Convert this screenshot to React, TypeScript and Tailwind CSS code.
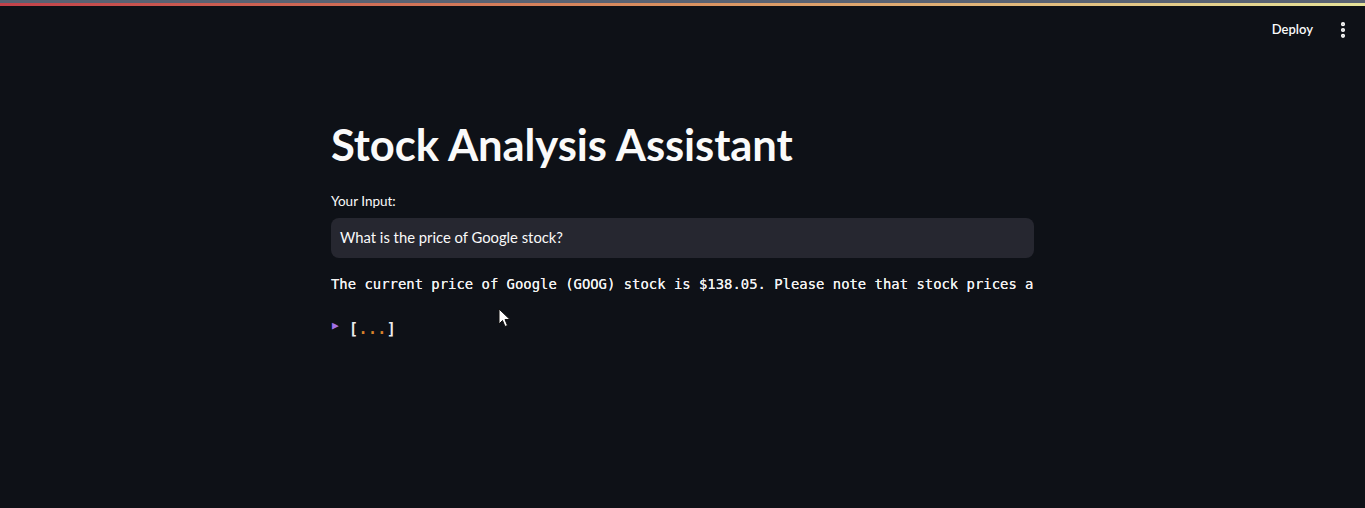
import { EllipsisVertical } from "lucide-react";

const sans = "font-['Lato','Noto_Sans',sans-serif]";
const mono = "font-['DejaVu_Sans_Mono','Liberation_Mono',monospace]";

function Header() {
  return (
    <header className="h-[60px] w-full">
      <div className="h-[3px] w-full bg-[#596272]" />
      <div className="h-[3px] w-full bg-gradient-to-r from-[#c2414a] via-[#d99160] to-[#e6e39a]" />
      <div className="flex h-[47px] items-center justify-end pr-[12px]">
        <span className={`${sans} mr-[20px] text-[13px] font-semibold text-[#fafafa]`}>Deploy</span>
        <EllipsisVertical className="h-5 w-5 text-[#fafafa]" strokeWidth={3} />
      </div>
    </header>
  );
}

function Cursor() {
  return (
    <svg className="absolute left-[498px] top-[308px]" width="14" height="20" viewBox="0 0 14 20">
      <path d="M1 1 L1 16 L4.5 12.5 L7 18.5 L9.5 17.5 L7 11.5 L12 11.5 Z" fill="#fff" stroke="#111" strokeWidth="1" />
    </svg>
  );
}

export default function App() {
  return (
    <div className="relative h-[508px] w-full overflow-hidden bg-[#0e1117] text-[#fafafa]">
      <Header />
      <main className="mx-auto w-[703px] pt-[58px]">
        <h1 className={`${sans} text-[43.6px] font-bold leading-[1.2] tracking-[-0.1px] text-[#fafafa]`}>
          Stock Analysis Assistant
        </h1>
        <div className="mt-[21px]">
          <label className={`${sans} block text-[13.5px] text-[#fafafa]`}>Your Input:</label>
          <div className="mt-[6px] flex h-[40px] items-center rounded-lg bg-[#262730] px-[9px]">
            <span className={`${sans} text-[14.8px] text-[#fafafa]`}>What is the price of Google stock?</span>
          </div>
        </div>
        <p className={`${mono} mt-[16px] whitespace-nowrap text-[13.9px] font-normal text-[#f2f2f2] [text-shadow:0_0_0.6px_#f2f2f2]`}>
          The current price of Google (GOOG) stock is $138.05. Please note that stock prices a
        </p>
        <div className={`${mono} mt-[24px] flex items-center text-[15px] font-semibold tracking-[0.4px]`}>
          <span className="ml-[1px] mr-[10px] -mt-[6px] text-[11px] text-[#a471e8]">▶</span>
          <span className="text-[#ececec]">[</span>
          <span className="text-[#d9822b]">...</span>
          <span className="text-[#ececec]">]</span>
        </div>
      </main>
      <Cursor />
    </div>
  );
}
